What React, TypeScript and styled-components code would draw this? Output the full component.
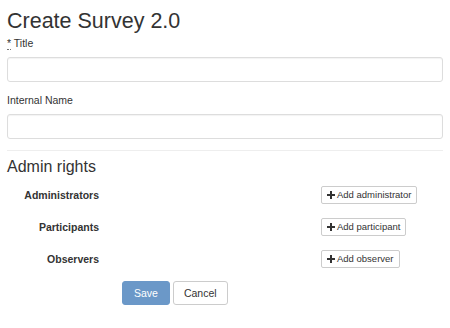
import { Fragment } from "react";
import styled, { createGlobalStyle } from "styled-components";

const Global = createGlobalStyle`
    body {
        margin: 0;
        background: #fff;
        font-family: "Liberation Sans", Arial, sans-serif;
        color: #333;
    }
`;

const Page = styled.div`
    padding: 0 7px;
    width: 450px;
    box-sizing: border-box;
`;

const Heading = styled.h1`
    font-size: 21.5px;
    font-weight: 400;
    line-height: 22px;
    margin: 10px 0 4px;
    color: #333;
`;

const FormGroup = styled.div`
    margin-bottom: 11px;
`;

const Label = styled.label`
    display: block;
    font-size: 10.5px;
    line-height: 15px;
    margin-bottom: 6px;
`;

const Required = styled.abbr`
    text-decoration: none;
    border-bottom: 1px dotted #777;
    cursor: help;
`;

const Input = styled.input`
    display: block;
    width: 100%;
    height: 25px;
    box-sizing: border-box;
    border: 1px solid #ddd;
    border-radius: 3px;
    box-shadow: inset 0 1px 1px rgba(0, 0, 0, 0.05);
    padding: 4px 9px;
    font: inherit;
    font-size: 10.5px;
`;

const Rule = styled.hr`
    border: 0;
    border-top: 1px solid #eee;
    margin: 1px 0 0;
`;

const Legend = styled.h2`
    font-size: 16px;
    font-weight: 400;
    line-height: 17.6px;
    margin: 7px 0 10px;
    color: #333;
`;

const Rights = styled.div`
    display: grid;
    grid-template-columns: 92px auto;
    column-gap: 222px;
    row-gap: 14px;
    justify-content: start;
`;

const RoleLabel = styled.div`
    font-size: 10.5px;
    font-weight: 700;
    line-height: 14px;
    padding-top: 2px;
    text-align: right;
`;

const SmallButton = styled.button`
    display: inline-flex;
    align-items: center;
    justify-self: start;
    gap: 2px;
    height: 18px;
    padding: 0 5px 0 5px;
    background: #fff;
    border: 1px solid #ccc;
    border-radius: 2px;
    font-family: "Liberation Sans", Arial, sans-serif;
    font-size: 9.5px;
    color: #333;
    cursor: pointer;
`;

const Actions = styled.div`
    display: flex;
    gap: 3px;
    margin-top: 13px;
    padding-left: 115px;
`;

const Button = styled.button<{ $primary?: boolean }>`
    height: 24px;
    padding: 0 ${(p) => (p.$primary ? 11 : 10)}px;
    border-radius: 3px;
    font-family: "Liberation Sans", Arial, sans-serif;
    font-size: 10.5px;
    border: 1px solid ${(p) => (p.$primary ? "#6b98c8" : "#ccc")};
    background: ${(p) => (p.$primary ? "#6b98c8" : "#fff")};
    color: ${(p) => (p.$primary ? "#fff" : "#333")};
    cursor: pointer;
`;

function Plus() {
    return (
        <svg width="8" height="8" viewBox="0 0 8 8">
            <path d="M3 0h2v3h3v2H5v3H3V5H0V3h3z" fill="#333" />
        </svg>
    );
}

const roles = [
    { label: "Administrators", action: "Add administrator" },
    { label: "Participants", action: "Add participant" },
    { label: "Observers", action: "Add observer" },
];

export default function App() {
    return (
        <Page>
            <Global />
            <Heading>Create Survey 2.0</Heading>
            <FormGroup>
                <Label>
                    <Required title="required">*</Required> Title
                </Label>
                <Input />
            </FormGroup>
            <FormGroup>
                <Label>Internal Name</Label>
                <Input />
            </FormGroup>
            <Rule />
            <Legend>Admin rights</Legend>
            <Rights>
                {roles.map((r) => (
                    <Fragment key={r.label}>
                        <RoleLabel>{r.label}</RoleLabel>
                        <SmallButton>
                            <Plus /> {r.action}
                        </SmallButton>
                    </Fragment>
                ))}
            </Rights>
            <Actions>
                <Button $primary>Save</Button>
                <Button>Cancel</Button>
            </Actions>
        </Page>
    );
}
